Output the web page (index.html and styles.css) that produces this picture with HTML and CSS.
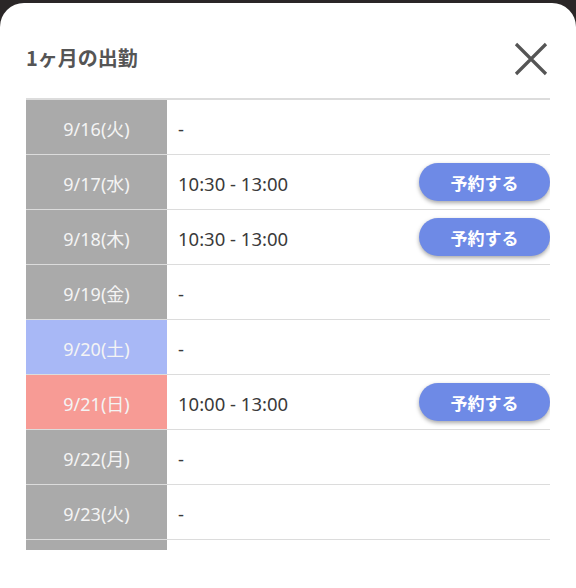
FILE: index.html
```html
<!DOCTYPE html>
<html lang="ja">
<head>
    <meta charset="UTF-8">
    <meta name="viewport" content="width=device-width, initial-scale=1.0">
    <title>1ヶ月の出勤</title>
    <link rel="stylesheet" href="styles.css">
</head>
<body>
    <div class="sheet">
        <div class="head">
            <h1>1ヶ月の出勤</h1>
            <button class="close" aria-label="閉じる">
                <svg width="34" height="34" viewBox="0 0 34 34">
                    <path d="M2 2 L32 32 M32 2 L2 32" stroke="#555" stroke-width="3.2" fill="none"/>
                </svg>
            </button>
        </div>
        <div class="list">
            <div class="row"><div class="day">9/16(火)</div><div class="time">-</div></div>
            <div class="row"><div class="day">9/17(水)</div><div class="time">10:30 - 13:00</div><button class="book">予約する</button></div>
            <div class="row"><div class="day">9/18(木)</div><div class="time">10:30 - 13:00</div><button class="book">予約する</button></div>
            <div class="row"><div class="day">9/19(金)</div><div class="time">-</div></div>
            <div class="row"><div class="day sat">9/20(土)</div><div class="time">-</div></div>
            <div class="row"><div class="day sun">9/21(日)</div><div class="time">10:00 - 13:00</div><button class="book">予約する</button></div>
            <div class="row"><div class="day">9/22(月)</div><div class="time">-</div></div>
            <div class="row"><div class="day">9/23(火)</div><div class="time">-</div></div>
            <!-- next row, scrolled out of view -->
            <div class="row"><div class="day"></div><div class="time"></div></div>
        </div>
    </div>
</body>
</html>
```

FILE: styles.css
```css
*{
    box-sizing: border-box;
    margin: 0;
    padding: 0;
}
body{
    background-color: #2a2627;
    font-family: "Noto Sans CJK JP", sans-serif;
    height: 588px;
    overflow: hidden;
}
.sheet{
    margin-top: 3px;
    background-color: white;
    border-radius: 24px 24px 0 0;
    height: 585px;
    padding: 0 26px;
}
.head{
    height: 95px;
    display: flex;
    align-items: center;
    justify-content: space-between;
    padding-top: 14px;
}
h1{
    font-size: 20px;
    font-weight: bold;
    color: #555;
}
.close{
    border: none;
    background: none;
    width: 34px;
    height: 34px;
    margin-right: 2px;
    margin-top: 2px;
}
.list{
    border-top: 2px solid #dcdcdc;
    height: 452px;
    overflow: hidden;
}
.row{
    display: flex;
    align-items: center;
    height: 55px;
    border-bottom: 1px solid #dcdcdc;
}
.day{
    width: 141px;
    height: 100%;
    background-color: #aaaaaa;
    color: #f4f4f4;
    font-family: "Noto Sans", "Noto Sans CJK JP", sans-serif;
    font-size: 18px;
    display: flex;
    align-items: center;
    justify-content: center;
    padding-top: 2px;
}
.sat{
    background-color: #a8b8f6;
}
.sun{
    background-color: #f79b95;
}
.time{
    flex: 1;
    padding-left: 11px;
    padding-top: 2px;
    font-family: "Noto Sans", sans-serif;
    font-size: 18.5px;
    color: #3a3a3a;
}
.book{
    width: 131px;
    height: 38px;
    border: none;
    border-radius: 19px;
    background-color: #6e8ae6;
    color: white;
    font-size: 17px;
    font-weight: bold;
    font-family: "Noto Sans CJK JP", sans-serif;
    box-shadow: 0 2px 4px rgba(0,0,0,0.35);
}
```
